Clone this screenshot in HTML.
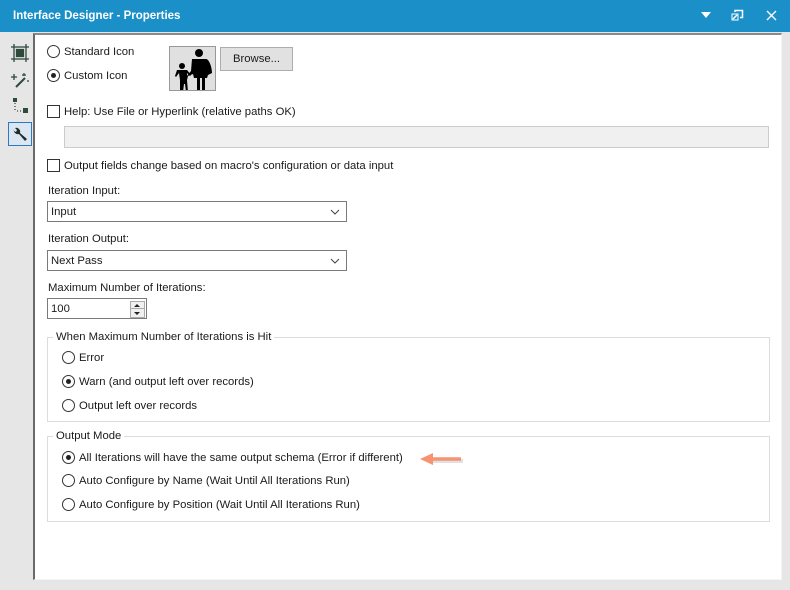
<!DOCTYPE html><html><head><style>
body{margin:0;width:790px;height:590px;background:#e6e6e6;font-family:"Liberation Sans",sans-serif;font-size:11.3px;color:#1a1a1a;position:relative;overflow:hidden}
.a{position:absolute;white-space:nowrap}
.t{margin-top:1px}
.r{position:absolute;width:11px;height:11px;border:1px solid #333;border-radius:50%;background:#fff}
.r.on::after{content:"";position:absolute;left:3px;top:3px;width:5px;height:5px;border-radius:50%;background:#222}
.c{position:absolute;width:11px;height:11px;border:1px solid #333;background:#fff}
.sel{position:absolute;height:19px;border:1px solid #7a7a7a;background:#fff}
.sel span{position:absolute;left:3px;top:4px}
.sel svg{position:absolute;right:6px;top:7px}
.grp{position:absolute;border:1px solid #dcdcdc}
</style></head><body>
<div class="a" style="left:0;top:0;width:790px;height:32px;background:#1a8fc8"></div>
<div class="a" style="left:13px;top:10px;color:#fff;font-weight:bold;font-size:11.5px">Interface Designer - Properties</div>
<svg class="a" style="left:700px;top:11px" width="12" height="8"><path d="M1 1h10L6 7z" fill="#fff"/></svg>
<svg class="a" style="left:731px;top:9px" width="13" height="12" fill="none" stroke="#fff" stroke-width="1.5"><path d="M4 3V1.5h7.5v7H9"/><path d="M1 5v6h6V5z" stroke-width="1"/><path d="M2 10l4-4"/></svg>
<svg class="a" style="left:766px;top:10px" width="11" height="11" stroke="#fff" stroke-width="1.4"><path d="M1 1l9 9M10 1l-9 9"/></svg>
<svg class="a" style="left:11px;top:44px" width="18" height="18" fill="none" stroke="#2d4a3a" stroke-width="1.3"><rect x="3" y="3" width="12" height="12"/><rect x="5.5" y="5.5" width="7" height="7" fill="#2d4a3a"/><path d="M3 0v3M15 0v3M0 3h3M15 3h3M3 15v3M15 15v3M0 15h3M15 15h3"/></svg>
<svg class="a" style="left:10px;top:70px" width="20" height="20" stroke="#2d4a3a" stroke-width="2" fill="none"><path d="M6 17l9-9"/><path d="M1 7h6M4 4v6" stroke-width="1.3"/><path d="M14 3v3M12 5h4M17 11h2" stroke-width="1.2"/></svg>
<svg class="a" style="left:11px;top:97px" width="18" height="18" fill="#2d4a3a"><rect x="2" y="1" width="4" height="4"/><rect x="12" y="11" width="5" height="5"/><path d="M4 6v1M4 9v1M4 12v1M6 14h1M9 14h1" stroke="#2d4a3a" stroke-width="1.3"/></svg>
<div class="a" style="left:8px;top:122px;width:22px;height:22px;border:1px solid #2b79c2;background:#dbe6f2"></div>
<svg class="a" style="left:11px;top:125px" width="18" height="18"><path d="M3 4a4 4 0 0 0 5 5l6 7 2-2-7-6a4 4 0 0 0-5-5l2 2-1 2-2-1z" fill="#1f2f28"/></svg>
<div class="a" style="left:33px;top:33px;width:746px;height:544px;background:#fff;border-left:2px solid #6a6a6a;border-top:2px solid #8a8a8a;border-right:1px solid #f4f4f4;border-bottom:1px solid #f4f4f4"></div>
<div class="r" style="left:47px;top:45px"></div><div class="a t" style="left:64px;top:45px">Standard Icon</div>
<div class="r on" style="left:47px;top:69px"></div><div class="a t" style="left:64px;top:69px">Custom Icon</div>
<div class="a" style="left:169px;top:46px;width:45px;height:43px;background:#e0e0e0;border:1px solid #999"></div>
<svg class="a" style="left:170px;top:47px" width="45" height="43" fill="#000"><circle cx="29" cy="6" r="4"/><path d="M22 12h14c3 0 6 8 6 14l-4 2-1 3h-2v13h-3V31h-2v13h-3V31h-3l-1-4-5 2-1 4-1-3 5-6 1-12z"/><circle cx="12" cy="19" r="3"/><path d="M7 23h10l4 5-1 1-3-3v7l1 12h-2l-1-8h-1l-1 8H10V33l-1-7-3 4-1-1z"/></svg>
<div class="a" style="left:220px;top:47px;width:71px;height:22px;background:#e1e1e1;border:1px solid #adadad;text-align:center;line-height:23px">Browse...</div>
<div class="c" style="left:47px;top:105px"></div><div class="a t" style="left:64px;top:105px">Help: Use File or Hyperlink (relative paths OK)</div>
<div class="a" style="left:64px;top:126px;width:703px;height:20px;background:#f0f0f0;border:1px solid #ccc"></div>
<div class="c" style="left:47px;top:159px"></div><div class="a t" style="left:64px;top:159px">Output fields change based on macro's configuration or data input</div>
<div class="a t" style="left:48px;top:184px">Iteration Input:</div>
<div class="sel" style="left:47px;top:201px;width:298px"><span>Input</span><svg width="10" height="6"><path d="M1 1l4 4 4-4" stroke="#444" fill="none"/></svg></div>
<div class="a t" style="left:48px;top:232px">Iteration Output:</div>
<div class="sel" style="left:47px;top:250px;width:298px"><span>Next Pass</span><svg width="10" height="6"><path d="M1 1l4 4 4-4" stroke="#444" fill="none"/></svg></div>
<div class="a t" style="left:48px;top:281px">Maximum Number of Iterations:</div>
<div class="sel" style="left:47px;top:298px;width:98px"><span>100</span></div>
<div class="a" style="left:130px;top:301px;width:13px;height:15px;border:1px solid #aaa;background:#f0f0f0"></div>
<div class="a" style="left:130px;top:308px;width:15px;height:1px;background:#aaa"></div>
<svg class="a" style="left:133px;top:303px" width="8" height="13" fill="#222"><path d="M1 4l3-3 3 3zM1 9l3 3 3-3z"/></svg>
<div class="grp" style="left:47px;top:337px;width:721px;height:83px"></div>
<div class="a t" style="left:53px;top:330px;background:#fff;padding:0 3px">When Maximum Number of Iterations is Hit</div>
<div class="r" style="left:62px;top:351px"></div><div class="a t" style="left:79px;top:351px">Error</div>
<div class="r on" style="left:62px;top:375px"></div><div class="a t" style="left:79px;top:375px">Warn (and output left over records)</div>
<div class="r" style="left:62px;top:399px"></div><div class="a t" style="left:79px;top:399px">Output left over records</div>
<div class="grp" style="left:47px;top:436px;width:721px;height:84px"></div>
<div class="a t" style="left:53px;top:429px;background:#fff;padding:0 3px">Output Mode</div>
<div class="r on" style="left:62px;top:451px"></div><div class="a t" style="left:79px;top:451px">All Iterations will have the same output schema (Error if different)</div>
<div class="r" style="left:62px;top:474px"></div><div class="a t" style="left:79px;top:474px">Auto Configure by Name (Wait Until All Iterations Run)</div>
<div class="r" style="left:62px;top:498px"></div><div class="a t" style="left:79px;top:498px">Auto Configure by Position (Wait Until All Iterations Run)</div>
<svg class="a" style="left:417px;top:450px" width="50" height="20"><path d="M46 11H16" stroke="#aaa" stroke-width="4" opacity=".35"/><path d="M44 9H14" stroke="#f59373" stroke-width="3.5"/><path d="M3 9l13-6v12z" fill="#f59373"/></svg>
</body></html>
